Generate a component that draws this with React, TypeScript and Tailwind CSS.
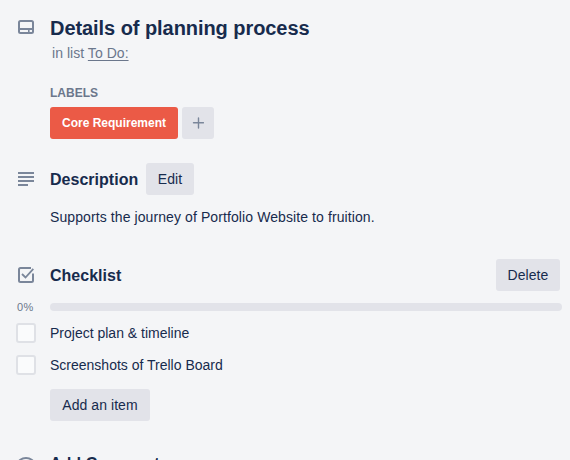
import type { ReactNode } from "react";

function GutterIcon({ children }: { children: ReactNode }) {
  return (
    <div className="flex w-[50px] shrink-0 items-center pl-[18px] text-[#7a869a]">
      <svg width="16" height="16" viewBox="0 0 16 16" fill="none" stroke="currentColor" className="overflow-visible">
        {children}
      </svg>
    </div>
  );
}

function Heading({ children }: { children: ReactNode }) {
  return <h3 className="pt-0.5 text-base leading-5 font-bold tracking-[0.02px] whitespace-nowrap">{children}</h3>;
}

function Button({ width, children }: { width: string; children: ReactNode }) {
  return (
    <button className={`${width} h-8 rounded-[3px] bg-[#e2e3e9] text-sm leading-5 tracking-[0.05px] whitespace-nowrap`}>
      {children}
    </button>
  );
}

function CheckItem({ children }: { children: ReactNode }) {
  return (
    <li className="flex h-8 items-center">
      <span className="ml-4 mr-[14px] h-5 w-5 shrink-0 rounded-[3px] border-2 border-[#dfe1e6] bg-[#fafbfc]" />
      <span className="text-sm leading-5">{children}</span>
    </li>
  );
}

export default function App() {
  return (
    <main className="h-[460px] w-[570px] overflow-hidden bg-[#f4f5f7] pt-4 font-['Liberation_Sans',Arial,sans-serif] text-[#172b4d]">
      <header className="flex h-6">
        <GutterIcon>
          <rect x="1" y="1" width="14" height="12" rx="1.5" strokeWidth="2" />
          <path d="M1 9h14" strokeWidth="2" />
          <path d="M10.8 9v4" strokeWidth="1.6" />
        </GutterIcon>
        <h2 className="text-xl leading-6 font-bold tracking-[-0.06px] whitespace-nowrap">Details of planning process</h2>
      </header>
      <p className="mt-[3px] pl-[52px] text-sm leading-5 tracking-[0.04px] text-[#6b778c]">
        in list <a className="underline underline-offset-2">To Do:</a>
      </p>

      <section className="mt-5 pl-[50px]">
        <h4 className="h-6 text-xs leading-5 font-bold text-[#6b778c]">LABELS</h4>
        <div className="flex gap-1">
          <span className="flex h-8 w-32 items-center justify-center rounded-[3px] bg-[#eb5a46] text-xs font-bold whitespace-nowrap text-white">
            Core Requirement
          </span>
          <button className="flex h-8 w-8 items-center justify-center rounded-[3px] bg-[#e2e3e9] text-[#7a869a]">
            <svg width="12" height="12" viewBox="0 0 12 12" fill="none" stroke="currentColor" strokeWidth="1.4" strokeLinecap="round">
              <path d="M6.5 1v10M1.5 5.7h10" />
            </svg>
          </button>
        </div>
      </section>

      <section className="mt-6">
        <div className="flex h-8 items-center">
          <GutterIcon>
            <path d="M0 2h16M0 6h16M0 10h16M0 14h10" strokeWidth="2" />
          </GutterIcon>
          <div className="w-24">
            <Heading>Description</Heading>
          </div>
          <Button width="w-12">Edit</Button>
        </div>
        <p className="mt-3 pl-[50px] text-sm leading-5 tracking-[0.095px] whitespace-nowrap">
          Supports the journey of Portfolio Website to fruition.
        </p>
      </section>

      <section className="mt-8">
        <div className="flex h-8 items-center pr-[10px]">
          <GutterIcon>
            <path d="M13 1H2.5A1.5 1.5 0 0 0 1 2.500v11A1.500 1.500 0 0 0 2.500 15h11a1.500 1.500 0 0 0 1.500-1.500V6.500" strokeWidth="2" />
            <path d="M4 7l3.500 3.500L15.300 1.800" strokeWidth="1.800" />
          </GutterIcon>
          <Heading>Checklist</Heading>
          <div className="ml-auto">
            <Button width="w-16">Delete</Button>
          </div>
        </div>
        <div className="mt-2 flex h-4 items-center pr-2">
          <span className="w-[50px] pl-[17px] text-[11px] leading-4 tracking-[0.4px] text-[#6b778c]">0%</span>
          <div className="h-2 flex-1 rounded bg-[#e2e3e9]" />
        </div>
        <ul className="mt-0.5">
          <CheckItem>Project plan &amp; timeline</CheckItem>
          <CheckItem>Screenshots of Trello Board</CheckItem>
        </ul>
        <div className="mt-2 pl-[50px]">
          <Button width="w-[100px]">Add an item</Button>
        </div>
      </section>

      <section className="mt-8 flex h-5 items-center">
        <GutterIcon>
          <ellipse cx="8" cy="9" rx="8" ry="6" strokeWidth="2" />
        </GutterIcon>
        <Heading>Add Comment</Heading>
      </section>
    </main>
  );
}
